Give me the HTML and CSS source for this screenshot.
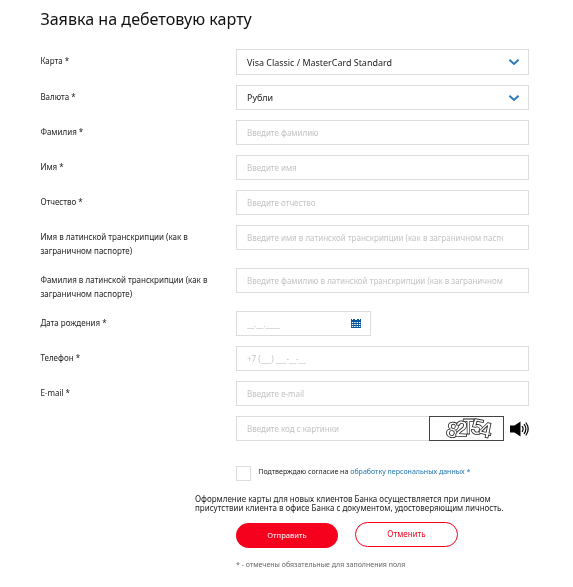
FILE: index.html
```html
<!DOCTYPE html>
<html lang="ru">
<head>
<meta charset="utf-8">
<title>Заявка на дебетовую карту</title>
<link rel="stylesheet" href="styles.css">
</head>
<body>
<form class="form">
  <h1 class="title">Заявка на дебетовую карту</h1>
  <div class="row row-first"><label class="label">Карта *</label><div class="field select"><span>Visa Classic / MasterCard Standard</span><svg class="chevron" viewBox="0 0 10 6"><path d="M.4.7 5 5 9.6.7"/></svg></div></div>
  <div class="row"><label class="label">Валюта *</label><div class="field select"><span>Рубли</span><svg class="chevron low" viewBox="0 0 10 6"><path d="M.4.7 5 5 9.6.7"/></svg></div></div>
  <div class="row"><label class="label">Фамилия *</label><div class="field"><span class="hint">Введите фамилию</span></div></div>
  <div class="row"><label class="label">Имя *</label><div class="field"><span class="hint">Введите имя</span></div></div>
  <div class="row"><label class="label">Отчество *</label><div class="field"><span class="hint">Введите отчество</span></div></div>
  <div class="row row-tall"><label class="label">Имя в латинской транскрипции (как в<br>заграничном паспорте)</label><div class="field"><span class="hint">Введите имя в латинской транскрипции (как в заграничном паспорте)</span></div></div>
  <div class="row row-tall"><label class="label">Фамилия в латинской транскрипции (как в<br>заграничном паспорте)</label><div class="field"><span class="hint">Введите фамилию в латинской транскрипции (как в заграничном паспорте)</span></div></div>
  <div class="row"><label class="label">Дата рождения *</label><div class="field date"><span class="hint">__.__.____</span>
    <svg class="calendar" viewBox="0 0 10 9"><path fill="#07559b" d="M0 0h1v1h1V0h2v1h2V0h2v1h1V0h1v9H0z"/><path fill="#fff" d="M.8 3h1.4v1.1H.8zm2.4 0h1.4v1.1H3.200zm2.4 0H7v1.1H5.600zm2.4 0h1.400v1.1H8zM.8 5h1.400v1.1H.8zm2.400 0h1.400v1.1H3.200zm2.400 0H7v1.1H5.600zM8 5h1.400v1.1H8zM.8 7h1.400v1.1H.8zm2.400 0h1.400v1.1H3.200zm2.400 0H7v1.1H5.600zM8 7h1.400v1.1H8z"/></svg></div></div>
  <div class="row"><label class="label">Телефон *</label><div class="field"><span class="hint">+7 (___) ___-__-__</span></div></div>
  <div class="row"><label class="label">E-mail *</label><div class="field"><span class="hint">Введите e-mail</span></div></div>
  <div class="row"><span class="label"></span><div class="code"><div class="field"><span class="hint">Введите код с картинки</span></div>
    <svg class="captcha" viewBox="0 0 75 25"><rect x=".5" y=".5" width="74" height="24" fill="#fff" stroke="#444"/>
      <g class="chars"><text transform="translate(16 20) rotate(12)">8</text><text transform="translate(26 20) rotate(3)">2</text><text transform="translate(34 18) scale(.8 1)">T</text><text transform="translate(41 17) rotate(12)">5</text><text transform="translate(49 20) rotate(12)">4</text></g></svg>
    <svg class="sound" viewBox="0 0 19 16"><path d="M0 4.5h4.5L10.500.5v15l-6-4H0z"/><path class="wave" d="M12 5.200q2.300 2.800 0 5.600M14 3.200q3.800 4.800 0 9.600M15.800 1.500q4.800 6.500 0 13"/></svg></div></div>
  <div class="agree"><span class="box"></span><span>Подтверждаю согласие на <a class="link">обработку персональных данных *</a></span></div>
  <p class="note">Оформление карты для новых клиентов Банка осуществляется при личном<br>присутствии клиента в офисе Банка с документом, удостоверяющим личность.</p>
  <div class="actions"><button type="button" class="btn primary">Отправить</button><button type="button" class="btn outline">Отменить</button></div>
  <p class="foot">* - отмечены обязательные для заполнения поля</p>
</form>
</body>
</html>
```
FILE: styles.css
```css
* { box-sizing: border-box; }
body { margin: 0; background: #fff; color: #1c1c1c; font: 8px/14px "Noto Sans", sans-serif; }
.form { width: 489px; margin-left: 40px; padding-top: 9px; will-change: transform; }
.title { margin: 0 0 20px; padding-left: .4px; font-size: 16.1px; line-height: 20px; font-weight: 400; white-space: nowrap; color: #111; }
.row { display: flex; align-items: flex-start; height: 25px; margin-bottom: 10px; }
.row-first { height: 26px; }
.row-first .field { height: 26px; }
.row-tall { height: 33px; }
.label { width: 196px; padding: 5px 0 0 .4px; white-space: nowrap; flex: none; }
.field { display: flex; align-items: center; width: 293px; height: 25px; border: 1px solid #ddd; padding: 1px 25px 0 10px; }
.hint { color: #c3c3c3; overflow: hidden; white-space: nowrap; }
.select { font-size: 8.95px; justify-content: space-between; padding-right: 9px; }
.chevron { width: 10px; height: 6px; margin-top: -2px; fill: none; stroke: #2c7bb8; stroke-width: 1.9; overflow: visible; }
.chevron.low { margin-top: 0; }
.date { width: 135px; justify-content: space-between; padding-right: 9px; }
.calendar { width: 10px; height: 9px; margin-top: -1px; }
.code { display: flex; align-items: center; }
.code .field { width: 193px; border-right: 0; padding-right: 0; }
.captcha { width: 75px; height: 25px; }
.chars { font: bold 22px "Liberation Sans", sans-serif; fill: #fff; stroke: #222; stroke-width: .8; }
.sound { width: 19px; height: 16px; margin-left: 6px; }
.wave { fill: none; stroke: #000; stroke-width: 1.2; }
.agree { display: flex; align-items: flex-start; height: 15px; margin: 25px 0 0 196px; font-size: 7.05px; line-height: 11px; white-space: nowrap; }
.box { width: 15px; height: 15px; margin-right: 7.3px; border: 1px solid #ddd; }
.link { color: #2276b4; }
.note { margin: 13px 0 0 155px; font-size: 8px; line-height: 9px; white-space: nowrap; }
.actions { display: flex; align-items: flex-start; gap: 17px; margin: 10px 0 0 196px; }
.btn { width: 102px; height: 25px; padding: 0 0 2px; border: 0; border-radius: 13px; font: 8px "Noto Sans", sans-serif; }
.primary { margin-top: 1px; background: #f5001d; color: #fff; font-size: 7.6px; }
.outline { width: 103px; border: 1px solid #f5001d; background: #fff; color: #f5001d; }
.foot { margin: 10px 0 0 196px; font-size: 7.02px; line-height: 12px; color: #666; white-space: nowrap; }
```
